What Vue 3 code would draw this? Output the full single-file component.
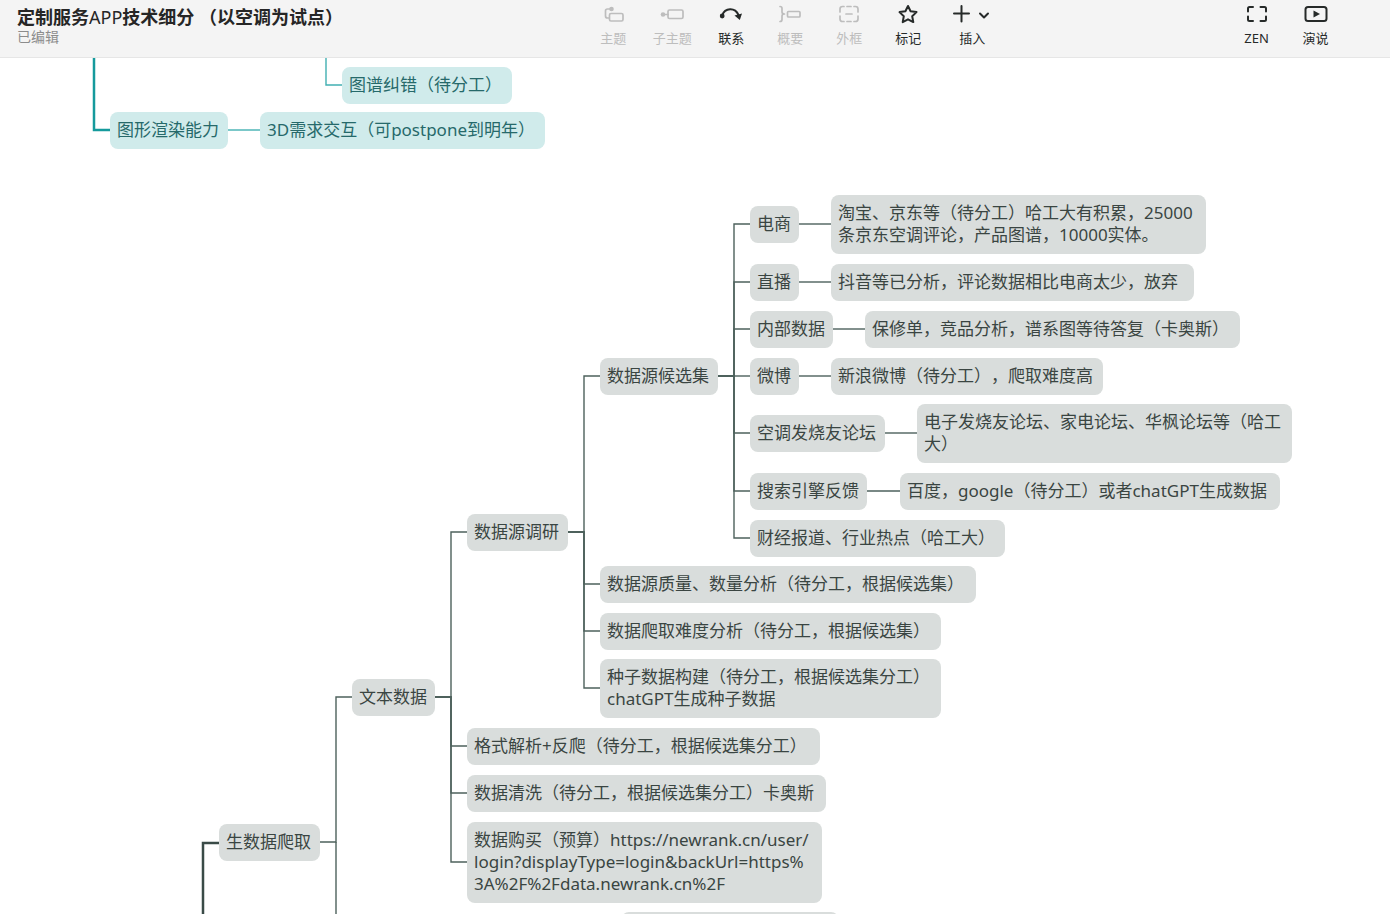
<script setup>
const tools = [
  { id: 'topic', label: '主题', disabled: true },
  { id: 'subtopic', label: '子主题', disabled: true },
  { id: 'relation', label: '联系' },
  { id: 'summary', label: '概要', disabled: true },
  { id: 'boundary', label: '外框', disabled: true },
  { id: 'marker', label: '标记' },
  { id: 'insert', label: '插入', wide: true },
]
const views = [
  { id: 'zen', label: 'ZEN' },
  { id: 'present', label: '演说' },
]

// Positions are canvas coordinates; height follows the number of text lines.
const n = (x, y, w, text, children = []) => ({ x, y, w, text, children })

const teal = [
  n(342, 9, 170, '图谱纠错（待分工）'),
  n(110, 54, 118, '图形渲染能力', [n(260, 54, 285, '3D需求交互（可postpone到明年）')]),
]

const gray = [
  n(219, 766, 101, '生数据爬取', [
    n(352, 621, 83, '文本数据', [
      n(467, 456, 101, '数据源调研', [
        n(600, 300, 118, '数据源候选集', [
          n(750, 148, 49, '电商', [
            n(831, 137, 375, '淘宝、京东等（待分工）哈工大有积累，25000\n条京东空调评论，产品图谱，10000实体。'),
          ]),
          n(750, 206, 49, '直播', [n(831, 206, 363, '抖音等已分析，评论数据相比电商太少，放弃')]),
          n(750, 253, 83, '内部数据', [n(865, 253, 375, '保修单，竞品分析，谱系图等待答复（卡奥斯）')]),
          n(750, 300, 49, '微博', [n(831, 300, 272, '新浪微博（待分工），爬取难度高')]),
          n(750, 357, 135, '空调发烧友论坛', [
            n(917, 346, 375, '电子发烧友论坛、家电论坛、华枫论坛等（哈工\n大）'),
          ]),
          n(750, 415, 117, '搜索引擎反馈', [n(900, 415, 380, '百度，google（待分工）或者chatGPT生成数据')]),
          n(750, 462, 255, '财经报道、行业热点（哈工大）'),
        ]),
        n(600, 508, 376, '数据源质量、数量分析（待分工，根据候选集）'),
        n(600, 555, 341, '数据爬取难度分析（待分工，根据候选集）'),
        n(600, 601, 341, '种子数据构建（待分工，根据候选集分工）\nchatGPT生成种子数据'),
      ]),
      n(467, 670, 353, '格式解析+反爬（待分工，根据候选集分工）'),
      n(467, 717, 359, '数据清洗（待分工，根据候选集分工）卡奥斯'),
      n(467, 764, 355, '数据购买（预算）https://newrank.cn/user/\nlogin?displayType=login&backUrl=https%\n3A%2F%2Fdata.newrank.cn%2F'),
    ]),
  ]),
  n(621, 854, 218, ' '),
]

const middle = (node) => node.y + 18 + 11 * (node.text.split('\n').length - 1)

function collect(roots, theme) {
  const nodes = []
  const links = []
  const visit = (node) => {
    nodes.push({ ...node, theme })
    for (const child of node.children) {
      links.push(`M${node.x + node.w} ${middle(node)}H${child.x - 16}V${middle(child)}H${child.x}`)
      visit(child)
    }
  }
  roots.forEach(visit)
  return { nodes, links }
}

const tealMap = collect(teal, 'teal')
const grayMap = collect(gray, 'gray')
const nodes = [...tealMap.nodes, ...grayMap.nodes]
</script>

<template>
  <div class="app">
    <header class="bar">
      <div class="doc">
        <h1>定制服务<span>APP</span>技术细分 （以空调为试点）</h1>
        <p>已编辑</p>
      </div>
      <nav class="group">
        <button v-for="t in tools" :key="t.id" type="button" class="tool" :class="{ wide: t.wide }" :disabled="t.disabled">
          <svg v-if="t.id === 'topic'" width="24" height="22" viewBox="0 0 24 22">
            <path d="M10 5H6.500Q4.500 5 4.500 7V12Q4.500 14 6.500 14H8" />
            <circle class="solid" cx="10.500" cy="5" r="2.300" />
            <rect x="8.500" y="9.500" width="13.500" height="7.500" rx="1.500" />
          </svg>
          <svg v-else-if="t.id === 'subtopic'" width="24" height="22" viewBox="0 0 24 22">
            <path d="M3 10.500H8" />
            <circle class="solid" cx="3" cy="10.500" r="2.300" />
            <rect x="8" y="6" width="15" height="8.500" rx="1.500" />
          </svg>
          <svg v-else-if="t.id === 'relation'" width="24" height="22" viewBox="0 0 24 22">
            <path class="bold" d="M3 11.500C6 3.500 16 3 19.500 11" />
            <circle class="solid" cx="3.200" cy="12" r="2.400" />
            <path class="solid" d="M15.500 11.500L23 9.500L20.800 16Z" />
          </svg>
          <svg v-else-if="t.id === 'summary'" width="24" height="22" viewBox="0 0 24 22">
            <path d="M2 2.500Q4 2.500 4 4.500V8Q4 10 6.500 10Q4 10 4 12V15.500Q4 17.500 2 17.500" />
            <rect x="9.500" y="7.500" width="12.500" height="5.500" rx="1" />
          </svg>
          <svg v-else-if="t.id === 'boundary'" width="24" height="22" viewBox="0 0 24 22">
            <path d="M3 8V5Q3 2.500 5.500 2.500H7M10 2.500H14M17 2.500H18.500Q21 2.500 21 5V8M21 12V15Q21 17.500 18.500 17.500H17M14 17.500H10M7 17.500H5.500Q3 17.500 3 15V12M9 10H15" />
          </svg>
          <svg v-else-if="t.id === 'marker'" width="24" height="22" viewBox="0 0 24 22">
            <path class="bold" d="M12 2L14.600 7.300L20.500 8.100L16.200 12.200L17.300 18.100L12 15.300L6.700 18.100L7.800 12.200L3.500 8.100L9.400 7.300Z" />
          </svg>
          <svg v-else width="40" height="22" viewBox="0 0 40 22">
            <path class="bold" d="M2 9.500H17M9.500 2V17.500M28 9.500L32 13.500L36 9.500" />
          </svg>
          <span>{{ t.label }}</span>
        </button>
      </nav>
      <nav class="group views">
        <button v-for="v in views" :key="v.id" type="button" class="tool">
          <svg v-if="v.id === 'zen'" width="24" height="22" viewBox="0 0 24 22">
            <path class="bold" d="M3 7.500V4.500Q3 3 4.500 3H8M15.500 3H19.500Q21 3 21 4.500V7.500M21 12.500V15.500Q21 17 19.500 17H15.500M8 17H4.500Q3 17 3 15.500V12.500" />
          </svg>
          <svg v-else width="24" height="22" viewBox="0 0 24 22">
            <rect class="bold" x="1.500" y="3" width="21" height="14" rx="2.500" />
            <path class="solid" d="M9.500 6.500L16 10L9.500 13.500Z" />
          </svg>
          <span>{{ v.label }}</span>
        </button>
      </nav>
    </header>

    <main class="canvas">
      <svg class="links" aria-hidden="true">
        <g class="teal">
          <path v-for="d in tealMap.links" :key="d" :d="d" />
          <path d="M326 0V27H342" />
          <path class="trunk" d="M94 0V72H110" />
        </g>
        <g class="gray">
          <path v-for="d in grayMap.links" :key="d" :d="d" />
          <path d="M336 784V2000" />
          <path class="trunk" d="M219 785H203V2000" />
        </g>
      </svg>
      <div
        v-for="node in nodes"
        :key="node.text"
        class="node"
        :class="node.theme"
        :style="{ left: node.x + 'px', top: node.y + 'px', width: node.w + 'px' }"
      >{{ node.text }}</div>
    </main>
  </div>
</template>

<style>
body {
  margin: 0;
  overflow: hidden;
}
</style>

<style scoped>
.app {
  display: flex;
  flex-direction: column;
  height: 100vh;
  background: #fff;
  font-family: "Noto Sans", "Noto Sans CJK SC", sans-serif;
  text-spacing-trim: space-all;
}
.bar {
  display: flex;
  flex: none;
  box-sizing: border-box;
  height: 58px;
  padding-right: 45px;
  background: #f4f4f4;
  border-bottom: 1px solid #e6e6e6;
}
.doc {
  flex: none;
  box-sizing: border-box;
  width: 42vw;
  padding: 5px 0 0 17px;
}
h1 {
  margin: 0;
  font-size: 18px;
  line-height: 24px;
  font-weight: 700;
  color: #262626;
  white-space: nowrap;
}
h1 span {
  font-weight: 400;
}
.doc p {
  margin: 0;
  font-size: 14px;
  line-height: 16px;
  color: #8c8c8c;
}
.group {
  display: flex;
}
.views {
  margin-left: auto;
}
.tool {
  display: flex;
  flex-direction: column;
  align-items: center;
  gap: 3px;
  width: 59px;
  padding: 4px 0 0;
  border: 0;
  background: none;
  color: #262a29;
  font-family: inherit;
  font-size: 13px;
  line-height: 18px;
}
.tool.wide {
  width: 69px;
}
.tool:disabled {
  color: #bdbdbd;
}
.tool svg {
  fill: none;
  stroke: currentColor;
  stroke-width: 1.7;
  stroke-linecap: round;
  stroke-linejoin: round;
}
.tool svg .bold {
  stroke-width: 2;
}
.tool svg .solid {
  fill: currentColor;
  stroke: none;
}
.canvas {
  position: relative;
  flex: 1;
  min-height: 0;
  overflow: hidden;
}
.links {
  position: absolute;
  inset: 0;
  width: 100%;
  height: 100%;
  fill: none;
  stroke-width: 1.4;
}
.links .teal {
  stroke: #42b0b2;
}
.links .gray {
  stroke: #4d615c;
}
.links .trunk {
  stroke-width: 2.5;
}
.links .teal .trunk {
  stroke: #159a9c;
}
.links .gray .trunk {
  stroke: #3a4b47;
}
.node {
  position: absolute;
  box-sizing: border-box;
  padding: 7px 7px 8px;
  border-radius: 8px;
  font-size: 17px;
  line-height: 22px;
  white-space: pre;
}
.node.teal {
  background: #d0ebeb;
  color: #26696a;
}
.node.gray {
  background: #d9dddc;
  color: #3a4542;
}
</style>
